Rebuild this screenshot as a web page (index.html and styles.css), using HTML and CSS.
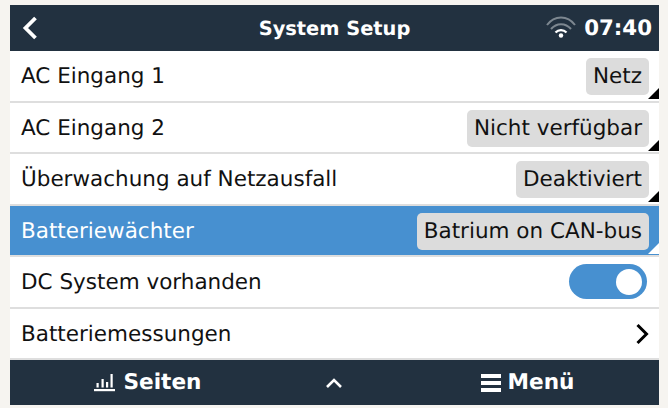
FILE: index.html
```html
<!DOCTYPE html>
<html lang="de">
<head>
<meta charset="utf-8">
<title>System Setup</title>
<link rel="stylesheet" href="styles.css">
</head>
<body>
<div class="screen">
  <header class="top">
    <svg class="back" width="16" height="24" viewBox="0 0 16 24"><path d="M13.500 2 3.500 12 13.500 22" fill="none" stroke="#fff" stroke-width="3.800"/></svg>
    <div class="title">System Setup</div>
    <div class="status">
      <svg class="wifi" width="30" height="24" viewBox="0 0 30 24" fill="none" stroke="#7d8790" stroke-width="2">
        <path d="M1 9C8.500 -1 21.500 -1 29 9"/>
        <path d="M5 13C10.500 6.500 19.500 6.500 25 13"/>
        <path d="M9.500 16.500C12.500 13.200 17.500 13.200 20.500 16.500" stroke="#fff" stroke-width="2.200"/>
        <circle cx="15" cy="19.500" r="2.200" fill="#fff" stroke="none"/>
      </svg>
      <span class="clock">07:40</span>
    </div>
  </header>
  <main class="list">
    <div class="row"><span>AC Eingang 1</span><span class="val">Netz</span></div>
    <div class="row"><span>AC Eingang 2</span><span class="val">Nicht verfügbar</span></div>
    <div class="row"><span>Überwachung auf Netzausfall</span><span class="val">Deaktiviert</span></div>
    <div class="row sel"><span>Batteriewächter</span><span class="val">Batrium on CAN-bus</span></div>
    <div class="row"><span>DC System vorhanden</span><span class="switch"><span class="knob"></span></span></div>
    <div class="row last"><span>Batteriemessungen</span>
      <svg class="chev" width="14" height="22" viewBox="0 0 14 22"><path d="M2.500 2 11.500 11 2.500 20" fill="none" stroke="#000" stroke-width="3"/></svg>
    </div>
  </main>
  <footer class="bottom">
    <div class="fitem fleft">
      <svg width="21" height="19" viewBox="0 0 21 19" fill="#fff"><rect x="0" y="16" width="21" height="2.200"/><rect x="2.500" y="10" width="2.200" height="4.500"/><rect x="7.500" y="6" width="2.200" height="8.500"/><rect x="12" y="9" width="2.200" height="5.500"/><rect x="16.500" y="1" width="2.200" height="13.500"/></svg>
      <span>Seiten</span>
    </div>
    <div class="fmid">
      <svg width="18" height="12" viewBox="0 0 18 12"><path d="M2 10 9 3 16 10" fill="none" stroke="#fff" stroke-width="2.600"/></svg>
    </div>
    <div class="fitem fright">
      <svg width="20" height="18" viewBox="0 0 20 18" fill="#fff"><rect width="20" height="4"/><rect y="7" width="20" height="4"/><rect y="14" width="20" height="4"/></svg>
      <span>Menü</span>
    </div>
  </footer>
</div>
</body>
</html>
```
FILE: styles.css
```css
html, body { margin: 0; padding: 0; }
body {
  width: 668px;
  height: 408px;
  background: #f6f4f0;
  font-family: "DejaVu Sans", sans-serif;
  text-rendering: geometricPrecision;
  overflow: hidden;
}
.screen {
  width: 649px;
  height: 400px;
  margin: 5px 0 0 10px;
  display: flex;
  flex-direction: column;
  background: #fff;
}
.top {
  flex: 0 0 46px;
  display: flex;
  align-items: center;
  background: #223140;
  color: #fff;
  position: relative;
  padding: 0 7px 0 12px;
}
.title {
  position: absolute;
  left: 0;
  right: 0;
  text-align: center;
  font-weight: 700;
  font-size: 19.400px;
}
.status {
  margin-left: auto;
  display: flex;
  align-items: center;
  gap: 8px;
  position: relative;
}
.clock { font-weight: 700; font-size: 21.300px; }
.list { flex: 0 0 309px; display: flex; flex-direction: column; }
.row {
  flex: 1 1 0;
  box-sizing: border-box;
  display: flex;
  align-items: center;
  justify-content: space-between;
  padding: 2px 10px 0 11px;
  border-bottom: 2px solid #dedede;
  font-size: 21.500px;
  color: #111;
  position: relative;
}
.row.sel { background: #4790d0; color: #fff; }
.val {
  background: #dcdcdc;
  color: #111;
  border-radius: 5px;
  padding: 0 7px;
  height: 37px;
  line-height: 37px;
  position: relative;
}
.val::after {
  content: "";
  position: absolute;
  right: -10px;
  bottom: -4px;
  border-style: solid;
  border-width: 0 0 11px 11px;
  border-color: transparent transparent #000 transparent;
}
.sel .val::after { border-bottom-color: #fff; }
.switch {
  width: 78px;
  height: 35px;
  border-radius: 18px;
  background: #4790d0;
  display: flex;
  align-items: center;
  justify-content: flex-end;
  padding-right: 5px;
  box-sizing: border-box;
  margin: 0 2px 2px 0;
}
.knob { width: 26px; height: 26px; border-radius: 50%; background: #fff; }
.bottom {
  flex: 1;
  display: grid;
  grid-template-columns: 274px 100px 275px;
  background: #223140;
  color: #fff;
  font-weight: 700;
  font-size: 21.600px;
}
.fitem { display: flex; align-items: center; justify-content: center; gap: 7px; }
.fleft { gap: 9px; padding-left: 1px; }
.fright { padding-left: 12px; }
.fmid { display: flex; align-items: center; justify-content: center; }
```
